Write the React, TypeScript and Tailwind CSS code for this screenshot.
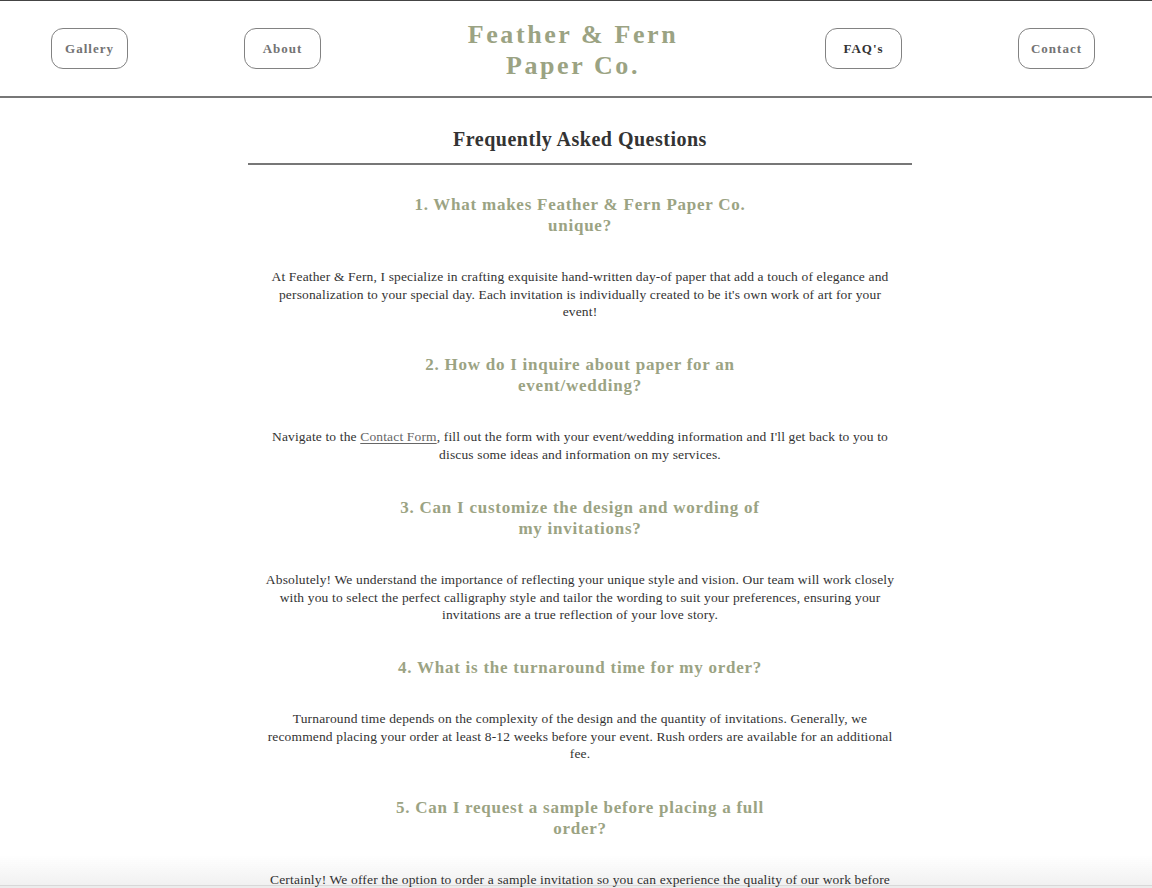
import React from "react";

const serif = { fontFamily: '"Liberation Serif", "Times New Roman", serif' };

type Faq = {
  question: string;
  answer: React.ReactNode;
};

const faqs: Faq[] = [
  {
    question: "1. What makes Feather & Fern Paper Co. unique?",
    answer:
      "At Feather & Fern, I specialize in crafting exquisite hand-written day-of paper that add a touch of elegance and personalization to your special day. Each invitation is individually created to be it's own work of art for your event!",
  },
  {
    question: "2. How do I inquire about paper for an event/wedding?",
    answer: (
      <>
        Navigate to the{" "}
        <a href="#contact" className="text-[#666] underline underline-offset-2">
          Contact Form
        </a>
        , fill out the form with your event/wedding information and I'll get back to you to discus some ideas and
        information on my services.
      </>
    ),
  },
  {
    question: "3. Can I customize the design and wording of my invitations?",
    answer:
      "Absolutely! We understand the importance of reflecting your unique style and vision. Our team will work closely with you to select the perfect calligraphy style and tailor the wording to suit your preferences, ensuring your invitations are a true reflection of your love story.",
  },
  {
    question: "4. What is the turnaround time for my order?",
    answer:
      "Turnaround time depends on the complexity of the design and the quantity of invitations. Generally, we recommend placing your order at least 8-12 weeks before your event. Rush orders are available for an additional fee.",
  },
  {
    question: "5. Can I request a sample before placing a full order?",
    answer:
      "Certainly! We offer the option to order a sample invitation so you can experience the quality of our work before placing a full order. Sample fees can be applied toward your final purchase.",
  },
  {
    question: "6. Do you offer other stationery items?",
    answer:
      "Yes! In addition to invitations, I create place cards, menus, signage, envelopes and other day-of paper goods to complete the look of your celebration.",
  },
];

function NavButton({ label, active = false }: { label: string; active?: boolean }) {
  return (
    <a
      href="#"
      className={
        active
          ? "flex h-[41px] w-[77px] items-center justify-center rounded-[12px] border border-[#828282] text-[13px] font-bold tracking-[1px] text-[#333]"
          : "flex h-[41px] w-[77px] items-center justify-center rounded-[12px] border border-[#828282] text-[13px] font-bold tracking-[1px] text-[#737373]"
      }
    >
      {label}
    </a>
  );
}

export default function App() {
  return (
    <div className="min-h-screen bg-white" style={serif}>
      <header className="flex h-[98px] items-center justify-between border-t border-b-2 border-t-[#444] border-b-[#777] pl-[51px] pr-[57px]">
        <NavButton label="Gallery" />
        <NavButton label="About" />
        <div className="flex w-[272px] flex-col items-center pt-[2px] text-[26px] font-bold leading-[31px] tracking-[2.6px] text-[#9ba383]">
          <span>Feather &amp; Fern</span>
          <span>Paper Co.</span>
        </div>
        <NavButton label="FAQ's" active />
        <NavButton label="Contact" />
      </header>

      <main className="ml-[248px] w-[664px] pb-16">
        <h1 className="border-b-2 border-[#777] pt-[29px] pb-[12px] text-center text-[20px] font-bold leading-[24px] tracking-[0.5px] text-[#333]">
          Frequently Asked Questions
        </h1>

        <div className="flex flex-col items-center px-[14px] pt-[29px]">
          {faqs.map((faq) => (
            <section key={faq.question} className="mb-[33.5px] flex flex-col items-center">
              <h2 className="max-w-[380px] text-center text-[17px] font-bold leading-[21px] tracking-[0.75px] text-[#9ba383]">
                {faq.question}
              </h2>
              <p className="mt-[32px] text-center text-[13.5px] leading-[17.6px] tracking-[0.15px] text-[#333]">
                {faq.answer}
              </p>
            </section>
          ))}
        </div>
      </main>

      <div className="pointer-events-none fixed inset-x-0 bottom-0 mix-blend-multiply">
        <div className="h-[30px] bg-gradient-to-b from-white/0 to-[#f1f1f1]" />
        <div className="h-[3px] border-t border-[#d8d8d8] bg-[#ececec]" />
      </div>
    </div>
  );
}
